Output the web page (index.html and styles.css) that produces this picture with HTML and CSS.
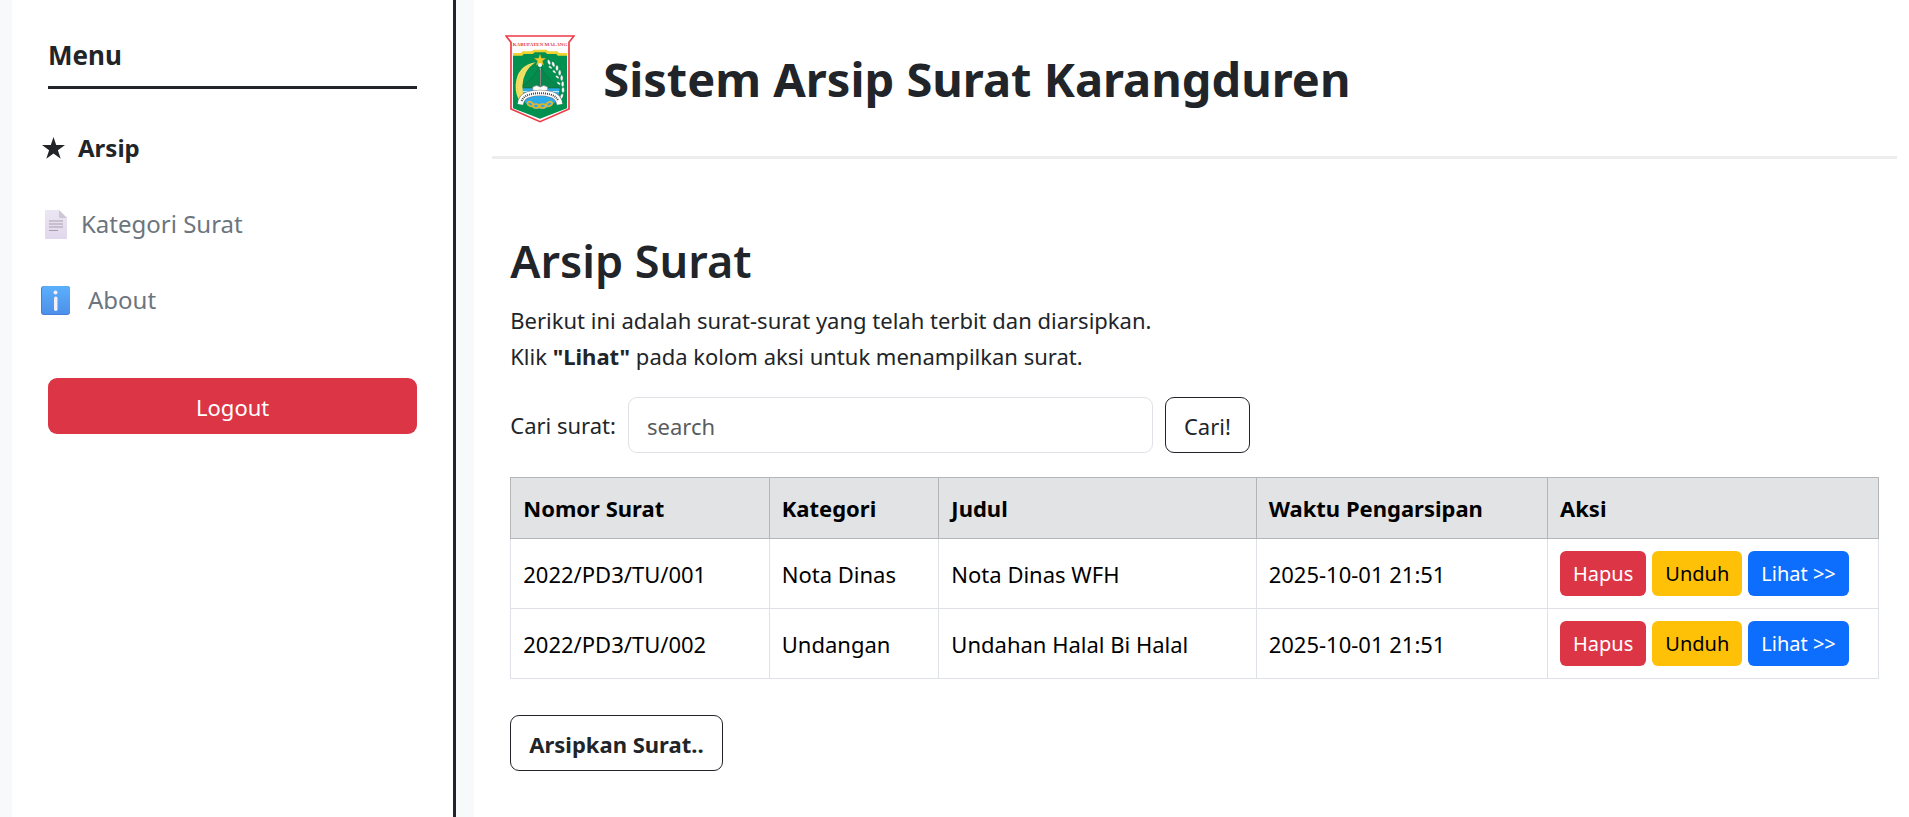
FILE: index.html
```html
<!DOCTYPE html>
<html lang="id">
<head>
<meta charset="utf-8">
<meta name="viewport" content="width=device-width, initial-scale=1">
<title>Sistem Arsip Surat Karangduren</title>
<link rel="stylesheet" href="styles.css">
</head>
<body>
<div class="layout">
  <aside class="sidebar">
    <h2 class="menu-title">Menu</h2>
    <nav class="menu">
      <a class="menu-link active" href="#arsip">
        <svg class="icon icon-star" viewBox="0 0 24 24" aria-hidden="true"><path fill="#212529" d="M12 1l2.700 8H23.500l-7.100 5.200 2.800 8.600L12 17.500l-7.200 5.300 2.800-8.600L.5 9h8.800z"/></svg>
        <span>Arsip</span>
      </a>
      <a class="menu-link link-kategori" href="#kategori">
        <svg class="icon icon-page" viewBox="0 0 22 29" aria-hidden="true">
          <defs><linearGradient id="paper" x1="0" y1="0" x2="0" y2="1"><stop offset="0" stop-color="#ece6f3"/><stop offset="1" stop-color="#e1d7ec"/></linearGradient></defs>
          <path fill="url(#paper)" d="M1 0h13l8 8v20q0 1-1 1H1q-1 0-1-1V1q0-1 1-1z"/>
          <path fill="#cdc6d3" d="M14 0l8 8h-7q-1 0-1-1z"/>
          <path stroke="#a79dad" stroke-width="1" d="M4 11h14M4 14h14M4 17h14M4 20.500h9"/>
        </svg>
        <span>Kategori Surat</span>
      </a>
      <a class="menu-link link-about" href="#about">
        <svg class="icon icon-info" viewBox="0 0 29 29" aria-hidden="true">
          <defs><linearGradient id="tile" x1="0" y1="0" x2="0" y2="1"><stop offset="0" stop-color="#5bb0fb"/><stop offset="1" stop-color="#4d90ea"/></linearGradient></defs>
          <rect width="29" height="29" rx="3" fill="#477ddd"/>
          <rect x="1" width="28" height="28" rx="3" fill="url(#tile)"/>
          <circle cx="14.500" cy="6.500" r="2" fill="#f4eefb"/>
          <rect x="13" y="10.500" width="3.500" height="14.500" rx="1.700" fill="#f4eefb"/>
        </svg>
        <span>About</span>
      </a>
    </nav>
    <button class="btn btn-red btn-logout" type="button">Logout</button>
  </aside>

  <main class="main">
    <header class="header">
      <svg class="logo" viewBox="0 0 210 264" role="img" aria-label="Kabupaten Malang">
        <path fill="#fff" stroke="#ee3a45" stroke-width="5" d="M3 3H207L192 22V222L105 260L18 222V22Z"/>
        <path fill="#009150" d="M24 58l20-3 20-2 22-3 19-3 19 3 22 3 20 2 20 3V220L105 251 24 220z"/>
        <path fill="none" stroke="#efd332" stroke-width="8" d="M24 58h26l4-5h28l5-5h36l5 5h28l4 5h26"/>
        <text class="logo-text" x="105" y="33" text-anchor="middle">KABUPATEN MALANG</text>
        <path fill="#2aaae8" d="M46 160H164Q162 194 148 204Q128 222 105 222Q82 222 62 204Q48 194 46 160z"/>
        <path stroke="#d9f3fc" stroke-width="3" d="M48 170h114"/>
        <path fill="#08894c" stroke="#176b42" stroke-width="2" d="M104 87Q98 123 46 158H164Q112 123 106 87z"/>
        <path fill="#f2df64" d="M92 82Q36 91 32 150Q31 182 45 198Q54 206 60 195Q43 151 63 112Q73 94 92 82z"/>
        <path fill="none" stroke="#d1b742" stroke-width="2" stroke-dasharray="3 5" d="M82 88Q43 104 38 151Q37 180 53 197"/>
        <g fill="#fff" stroke="#43765a" stroke-width="1">
          <ellipse cx="132" cy="82" rx="4" ry="8" transform="rotate(-20 132 82)"/><ellipse cx="145" cy="88" rx="4" ry="8" transform="rotate(-20 145 88)"/>
          <ellipse cx="156" cy="99" rx="4" ry="8"/><ellipse cx="164" cy="113" rx="4" ry="8"/>
          <ellipse cx="170" cy="129" rx="4" ry="8"/><ellipse cx="173" cy="147" rx="4" ry="8"/>
          <ellipse cx="174" cy="165" rx="4" ry="8"/><ellipse cx="170" cy="184" rx="4" ry="8" transform="rotate(20 170 184)"/>
          <ellipse cx="136" cy="97" rx="3" ry="6" transform="rotate(-50 136 97)"/><ellipse cx="148" cy="110" rx="3" ry="6" transform="rotate(-50 148 110)"/>
          <ellipse cx="157" cy="126" rx="3" ry="6" transform="rotate(-50 157 126)"/><ellipse cx="161" cy="145" rx="3" ry="6" transform="rotate(-50 161 145)"/>
        </g>
        <path fill="#f5c928" stroke="#d1a41f" stroke-width="1" d="M105 58l4 12h13l-10 8 4 13-11-8-11 8 4-13-10-8h13z"/>
        <circle cx="105" cy="90" r="6" fill="#fff"/>
        <path stroke="#222" stroke-width="4" d="M106 105v48"/><path stroke="#ddd" stroke-width="2" d="M106 98v55"/>
        <path fill="#fff" stroke="#777" stroke-width="2" d="M83 156q12-9 23 0 10-9 22 0v8q-5 9-22 9t-23-9z"/>
        <g fill="none" stroke="#e4b62d" stroke-width="5"><ellipse cx="76" cy="207" rx="9" ry="6" transform="rotate(28 76 207)"/><ellipse cx="93" cy="213" rx="9" ry="6"/><ellipse cx="113" cy="213" rx="9" ry="6"/><ellipse cx="133" cy="207" rx="9" ry="6" transform="rotate(-28 133 207)"/></g>
        <path fill="none" stroke="#777" stroke-width="19" d="M46 208Q49 184 72 178Q105 169 138 178Q161 184 164 208"/>
        <path fill="none" stroke="#fff" stroke-width="16" d="M46 208Q49 184 72 178Q105 169 138 178Q161 184 164 208"/>
        <path fill="none" stroke="#444" stroke-width="6" stroke-dasharray="3 3" d="M50 198Q56 184 72 179Q105 170 138 179Q154 184 160 198"/>
      </svg>
      <h1 class="site-title">Sistem Arsip Surat Karangduren</h1>
    </header>

    <section class="content">
      <h2 class="page-title">Arsip Surat</h2>
      <p class="intro">Berikut ini adalah surat-surat yang telah terbit dan diarsipkan.<br>Klik <strong>"Lihat"</strong> pada kolom aksi untuk menampilkan surat.</p>
      <form class="search">
        <label for="search">Cari surat:</label>
        <input class="search-input" id="search" type="text" placeholder="search">
        <button class="btn btn-outline" type="button">Cari!</button>
      </form>
      <table class="table">
        <colgroup><col class="col-nomor"><col class="col-kategori"><col class="col-judul"><col class="col-waktu"><col></colgroup>
        <thead>
          <tr><th>Nomor Surat</th><th>Kategori</th><th>Judul</th><th>Waktu Pengarsipan</th><th>Aksi</th></tr>
        </thead>
        <tbody>
          <tr>
            <td>2022/PD3/TU/001</td><td>Nota Dinas</td><td>Nota Dinas WFH</td><td>2025-10-01 21:51</td>
            <td><div class="actions"><button class="btn btn-small btn-red" type="button">Hapus</button><button class="btn btn-small btn-yellow" type="button">Unduh</button><button class="btn btn-small btn-blue" type="button">Lihat &gt;&gt;</button></div></td>
          </tr>
          <tr>
            <td>2022/PD3/TU/002</td><td>Undangan</td><td>Undahan Halal Bi Halal</td><td>2025-10-01 21:51</td>
            <td><div class="actions"><button class="btn btn-small btn-red" type="button">Hapus</button><button class="btn btn-small btn-yellow" type="button">Unduh</button><button class="btn btn-small btn-blue" type="button">Lihat &gt;&gt;</button></div></td>
          </tr>
        </tbody>
      </table>
      <button class="btn btn-outline btn-bold" type="button">Arsipkan Surat..</button>
    </section>
  </main>
</div>
</body>
</html>
```
FILE: styles.css
```css
* { box-sizing: border-box; }

body {
  margin: 0;
  background: #f8f9fa;
  color: #212529;
  font-family: "Noto Sans", "Open Sans", sans-serif;
  font-size: 22px;
  line-height: 36px;
}

h1, h2, p { margin: 0; }

.layout {
  display: grid;
  grid-template-columns: calc(25% - 21px) 1fr;
  column-gap: 18px;
  min-height: 100vh;
}

/* Sidebar */
.sidebar {
  margin-left: 12px;
  padding: 37px 36px 36px;
  background: #fff;
  border-right: 3px solid #212529;
}

.menu-title {
  padding-bottom: 13px;
  border-bottom: 3px solid #212529;
  font-size: 26px;
  font-weight: 700;
}

.menu {
  display: flex;
  flex-direction: column;
  gap: 40px;
  margin: 41px 0 60px -7px;
}

.menu-link {
  display: flex;
  align-items: center;
  gap: 12px;
  color: #6c757d;
  font-size: 24px;
  text-decoration: none;
}

.menu-link.active { color: #212529; font-weight: 700; }
.link-kategori { gap: 14px; padding-left: 4px; }
.link-about { gap: 18px; }

.icon { flex: none; }
.icon-star { width: 25px; height: 24px; }
.icon-page { width: 22px; height: 29px; }
.icon-info { width: 29px; height: 29px; }

/* Buttons */
.btn {
  padding: 10px 18px 8px;
  border: 1px solid transparent;
  border-radius: 9px;
  background: transparent;
  color: #212529;
  font: inherit;
  cursor: pointer;
}

.btn-logout { width: 100%; }
.btn-red { background: #dc3545; color: #fff; }
.btn-yellow { background: #ffc107; color: #000; }
.btn-blue { background: #0d6efd; color: #fff; }
.btn-outline { border-color: #212529; }
.btn-bold { font-weight: 700; }

.btn-small {
  padding: 6px 12px;
  border-radius: 6px;
  font-size: 20px;
  line-height: 31px;
}

/* Main */
.main {
  padding: 0 12px 36px 18px;
  background: #fff;
}

.header {
  display: flex;
  align-items: center;
  gap: 28px;
  height: 159px;
  padding: 2px 0 0 13px;
  border-bottom: 3px solid #ededed;
}

.logo { width: 70px; height: 88px; flex: none; }
.logo-text { fill: #e23b46; font: 700 15px "Liberation Serif", serif; }

.site-title { font-size: 47px; font-weight: 700; line-height: 58px; }

.content { padding: 72px 18px 0; }

.page-title {
  margin-bottom: 11px;
  font-size: 45px;
  font-weight: 600;
  line-height: 60px;
}

.search {
  display: flex;
  align-items: center;
  gap: 12px;
  margin: 23px 0 24px;
}

.search-input {
  flex: 0 1 525px;
  min-width: 0;
  padding: 10px 18px 8px;
  border: 1px solid #dee2e6;
  border-radius: 9px;
  background: #fff;
  color: #212529;
  font: inherit;
}

.search-input::placeholder { color: #595c5f; opacity: 1; }

.table {
  width: 100%;
  margin-bottom: 36px;
  border-collapse: collapse;
  table-layout: fixed;
  color: #000;
}

.table th, .table td {
  padding: 12px;
  border: 1px solid #dee2e6;
  text-align: left;
  vertical-align: middle;
}

.table th { border-color: #b4b6b9; background: #e2e3e5; font-weight: 700; }

.col-nomor { width: 18.9%; }
.col-kategori { width: 12.4%; }
.col-judul { width: 23.2%; }
.col-waktu { width: 21.3%; }

.actions { display: flex; gap: 6px; }
```
